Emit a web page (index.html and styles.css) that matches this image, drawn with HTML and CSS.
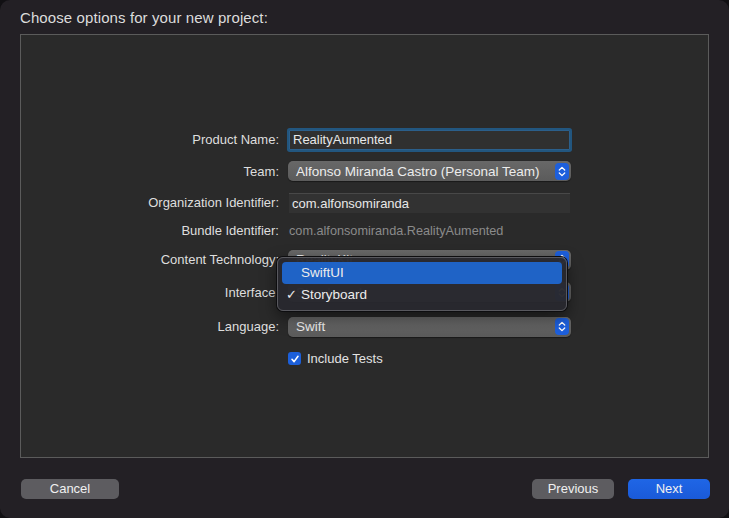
FILE: index.html
```html
<!DOCTYPE html>
<html>
<head>
<meta charset="utf-8">
<link rel="stylesheet" href="styles.css">
</head>
<body>
<div class="window">
  <div class="title">Choose options for your new project:</div>
  <div class="panel">
    <div class="form">
      <div class="row r1">
        <div class="label">Product Name:</div>
        <div class="field"><div class="textfield focused">RealityAumented</div></div>
      </div>
      <div class="row r2">
        <div class="label">Team:</div>
        <div class="field"><div class="popup"><span>Alfonso Miranda Castro (Personal Team)</span><span class="stepper"><svg width="8" height="11" viewBox="0 0 8 11"><path d="M1.3 4 L4 1.4 L6.7 4 M1.3 7 L4 9.6 L6.7 7" fill="none" stroke="#fff" stroke-width="1.3" stroke-linecap="round" stroke-linejoin="round"/></svg></span></div></div>
      </div>
      <div class="row r3">
        <div class="label">Organization Identifier:</div>
        <div class="field"><div class="textfield">com.alfonsomiranda</div></div>
      </div>
      <div class="row r4">
        <div class="label">Bundle Identifier:</div>
        <div class="field"><div class="plain">com.alfonsomiranda.RealityAumented</div></div>
      </div>
      <div class="row r5">
        <div class="label">Content Technology:</div>
        <div class="field anchor">
          <div class="popup"><span>RealityKit</span><span class="stepper"><svg width="8" height="11" viewBox="0 0 8 11"><path d="M1.3 4 L4 1.4 L6.7 4 M1.3 7 L4 9.6 L6.7 7" fill="none" stroke="#fff" stroke-width="1.3" stroke-linecap="round" stroke-linejoin="round"/></svg></span></div>
          <div class="menu">
            <div class="item selected"><span class="check"></span>SwiftUI</div>
            <div class="item"><span class="check">✓</span>Storyboard</div>
          </div>
        </div>
      </div>
      <div class="row r6">
        <div class="label">Interface:</div>
        <div class="field"><div class="popup"><span>Storyboard</span><span class="stepper"><svg width="8" height="11" viewBox="0 0 8 11"><path d="M1.3 4 L4 1.4 L6.7 4 M1.3 7 L4 9.6 L6.7 7" fill="none" stroke="#fff" stroke-width="1.3" stroke-linecap="round" stroke-linejoin="round"/></svg></span></div></div>
      </div>
      <div class="row r7">
        <div class="label">Language:</div>
        <div class="field"><div class="popup"><span>Swift</span><span class="stepper"><svg width="8" height="11" viewBox="0 0 8 11"><path d="M1.3 4 L4 1.4 L6.7 4 M1.3 7 L4 9.6 L6.7 7" fill="none" stroke="#fff" stroke-width="1.3" stroke-linecap="round" stroke-linejoin="round"/></svg></span></div></div>
      </div>
      <div class="row r8">
        <div class="label"></div>
        <div class="field"><label class="checkrow"><span class="checkbox"><svg width="10" height="10" viewBox="0 0 10 10"><path d="M2 5.3 L4.1 7.6 L8 2.3" fill="none" stroke="#fff" stroke-width="1.6" stroke-linecap="round" stroke-linejoin="round"/></svg></span>Include Tests</label></div>
      </div>
    </div>
  </div>
  <div class="footer">
    <div class="btn cancel">Cancel</div>
    <div class="spacer"></div>
    <div class="btn previous">Previous</div>
    <div class="btn next">Next</div>
  </div>
</div>
</body>
</html>
```

FILE: styles.css
```css
html, body {
  margin: 0;
  padding: 0;
  background: #111013;
}
body {
  width: 729px;
  height: 518px;
  font-family: "Liberation Sans", Arial, sans-serif;
  font-size: 13px;
  color: #e2e2e2;
}
.window {
  box-sizing: border-box;
  width: 729px;
  height: 518px;
  background: #232025;
  border-radius: 10px;
  display: flex;
  flex-direction: column;
  padding: 0 20px 0 20px;
}
.title {
  height: 34px;
  line-height: 35px;
  font-size: 15px;
  color: #dcdcdc;
  letter-spacing: 0.1px;
}
.panel {
  box-sizing: border-box;
  height: 424px;
  background: #2a2a2a;
  border: 1px solid #5b5b5b;
  padding-top: 89px;
}
.form {
  display: flex;
  flex-direction: column;
}
.row {
  display: flex;
  align-items: center;
}
.r1 { height: 31px; }
.r2 { height: 32px; }
.r3 { height: 31px; }
.r4 { height: 25px; }
.r5 { height: 33px; }
.r6 { height: 32px; }
.r7 { height: 37px; }
.r8 { height: 27px; }
.label {
  width: 258px;
  text-align: right;
  color: #dedede;
  padding-right: 9px;
  flex: none;
}
.field {
  width: 283px;
  flex: none;
}
.anchor { position: relative; }
.textfield {
  box-sizing: border-box;
  height: 20px;
  line-height: 19px;
  background: #323232;
  border-top: 1px solid #484848;
  padding-left: 3px;
  color: #e8e8e8;
  margin-left: 1px;
  margin-right: 1px;
}
.textfield.focused {
  background: #303030;
  border: 1px solid #2b5f8b;
  box-shadow: 0 0 0 2px #22567f;
  border-radius: 1px;
  line-height: 18px;
}
.plain {
  color: #8b8b8b;
  padding-left: 1px;
  font-size: 12.7px;
}
.popup {
  box-sizing: border-box;
  height: 20px;
  border-radius: 5px;
  background: linear-gradient(#686868, #5b5b5b);
  box-shadow: 0 0.5px 1px rgba(0,0,0,0.4);
  display: flex;
  align-items: center;
  justify-content: space-between;
  padding-left: 8px;
  padding-right: 2px;
  color: #ececec;
  font-size: 13.5px;
}
.stepper {
  width: 14px;
  height: 17px;
  border-radius: 4px;
  background: #1d5fdc;
  display: flex;
  align-items: center;
  justify-content: center;
}
.menu {
  position: absolute;
  left: -11px;
  top: 7px;
  width: 290px;
  height: 54px;
  box-sizing: border-box;
  background: rgba(40,40,46,0.97);
  border: 1px solid #58585e;
  border-radius: 6px;
  box-shadow: 0 0 0 1px #0d0d0f, 0 6px 16px rgba(0,0,0,0.5);
  padding: 4px 4px;
}
.item {
  height: 22px;
  line-height: 22px;
  border-radius: 4px;
  color: #ececec;
  display: flex;
  align-items: center;
  font-size: 13.5px;
}
.item.selected { background: #1f63c6; }
.check {
  width: 19px;
  padding-left: 4px;
  box-sizing: border-box;
  font-size: 13px;
}
.checkrow {
  display: flex;
  align-items: center;
  color: #e2e2e2;
}
.checkbox {
  width: 13px;
  height: 13px;
  border-radius: 3px;
  background: #1c5fd9;
  display: flex;
  align-items: center;
  justify-content: center;
  margin-right: 6px;
}
.footer {
  display: flex;
  align-items: center;
  padding-top: 21px;
}
.spacer { flex: 1; }
.btn {
  height: 20px;
  line-height: 20px;
  border-radius: 5px;
  background: #5d5c60;
  color: #f0f0f0;
  text-align: center;
  box-sizing: border-box;
}
.cancel { width: 98px; margin-left: 1px; }
.previous { width: 82px; margin-right: 14px; }
.next { width: 82px; margin-right: -1px; background: linear-gradient(#1f66e6, #1a5ad9); }
```
